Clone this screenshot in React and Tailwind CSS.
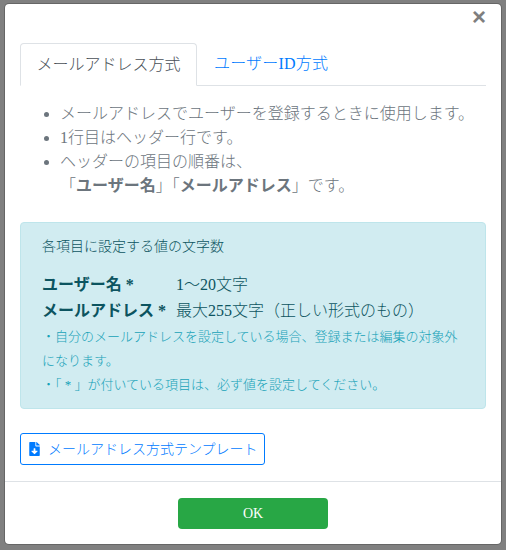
import React from 'react';

const FileDownIcon = () => (
  <svg viewBox="0 0 384 512" className="w-[11px] h-[14px] mr-[8px] shrink-0" fill="#007bff" aria-hidden>
    <path d="M224 136V0H24C10.700 0 0 10.700 0 24v464c0 13.300 10.700 24 24 24h336c13.300 0 24-10.700 24-24V160H248c-13.200 0-24-10.800-24-24zm76.450 211.360l-96.420 95.700c-6.650 6.610-17.390 6.610-24.040 0l-96.420-95.700C73.420 337.290 80.540 320 94.820 320H160v-80c0-8.840 7.160-16 16-16h32c8.840 0 16 7.160 16 16v80h65.180c14.280 0 21.400 17.290 11.270 27.360zM377 105L279.100 7c-4.500-4.500-10.600-7-17-7H256v128h128v-6.100c0-6.300-2.500-12.400-7-16.900z" />
  </svg>
);

const App = () => {
  return (
    <div className="w-[506px] h-[550px] bg-[#808080] overflow-hidden pt-[3px] pl-[4px] font-light font-['Liberation_Serif','Noto_Sans_CJK_JP',serif] text-[#6c757d]">
      <div className="w-[498px] h-[542px] bg-white bg-clip-padding rounded-[5px] border border-[#0003] flex flex-col">
        <div className="flex justify-end h-[27px] pr-[15px]">
          <span className="font-['Liberation_Sans',sans-serif] text-[24px] leading-[24px] font-bold text-[#7f7f7f] mt-[1px]">×</span>
        </div>
        <div className="px-[15px] pt-[12px] flex-1">
          <div className="flex border-b border-[#dee2e6] h-[43px]">
            <div className="w-[177px] h-[43px] border border-[#dee2e6] border-b-white rounded-t-[4px] bg-white text-[#495057] text-[16px] flex items-center justify-center">
              メールアドレス方式
            </div>
            <div className="px-[17px] text-[#007bff] text-[16px] tracking-[0.2px] flex items-center h-[42px]">ユーザーID方式</div>
          </div>
          <ul className="list-disc pl-[40px] mt-[16px] text-[16px] leading-[24px]">
            <li>メールアドレスでユーザーを登録するときに使用します。</li>
            <li>1行目はヘッダー行です。</li>
            <li>
              ヘッダーの項目の順番は、
              <br />
              「<b className="font-bold">ユーザー名</b>」「<b className="font-bold">メールアドレス</b>」です。
            </li>
          </ul>
          <div className="mt-[24px] h-[187px] bg-[#d1ecf1] border border-[#bee5eb] rounded-[4px] px-[21px] pt-[13px] text-[#0c5460]">
            <p className="text-[14px] leading-[21px]">各項目に設定する値の文字数</p>
            <div className="mt-[15px] text-[16px] leading-[26px]">
              <div className="flex">
                <b className="w-[134px] font-bold">ユーザー名 *</b>
                <span>1～20文字</span>
              </div>
              <div className="flex">
                <b className="w-[134px] font-bold">メールアドレス *</b>
                <span>最大255文字（正しい形式のもの）</span>
              </div>
            </div>
            <p className="text-[13px] leading-[24px] text-[#17a2b8] mt-[1px]">
              ・自分のメールアドレスを設定している場合、登録または編集の対象外になります。
              <br />
              ・「 * 」が付いている項目は、必ず値を設定してください。
            </p>
          </div>
          <div className="mt-[24px] w-[245px] h-[32px] border border-[#007bff] rounded-[3px] flex items-center pl-[8px] text-[14px] text-[#007bff]">
            <FileDownIcon />
            メールアドレス方式テンプレート
          </div>
        </div>
        <div className="h-[63px] border-t border-[#dee2e6] flex justify-center pt-[16px]">
          <div className="w-[150px] h-[31px] bg-[#28a745] rounded-[4px] text-white text-[14px] flex items-center justify-center">OK</div>
        </div>
      </div>
    </div>
  );
};

export default App;
